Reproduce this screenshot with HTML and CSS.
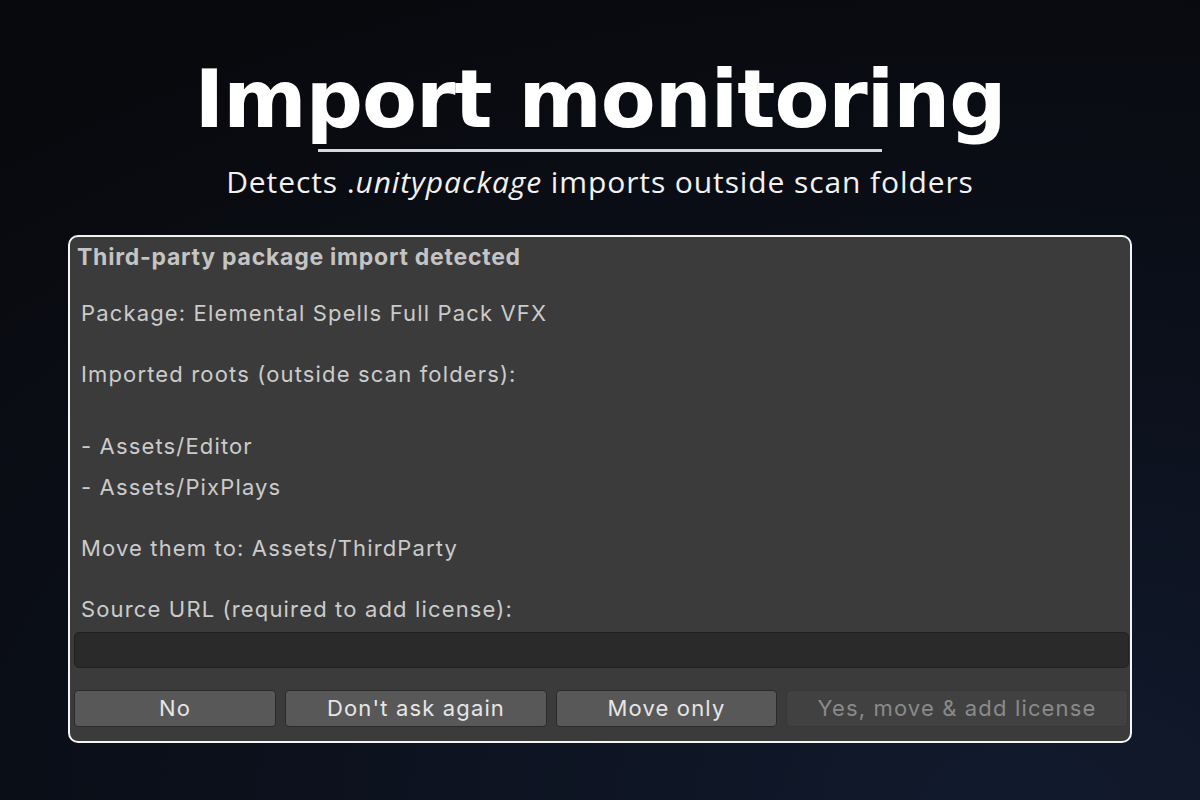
FILE: index.html
```html
<!DOCTYPE html>
<html>
<head>
<meta charset="utf-8">
<link rel="stylesheet" href="styles.css">
</head>
<body>
<div class="page">
  <header class="hero">
    <h1 class="title">Import monitoring</h1>
    <div class="rule"></div>
    <p class="subtitle">Detects .<em>unitypackage</em> imports outside scan folders</p>
  </header>
  <section class="panel">
    <div class="panel-head">Third-party package import detected</div>
    <div class="line l-pkg">Package: Elemental Spells Full Pack VFX</div>
    <div class="line l-roots">Imported roots (outside scan folders):</div>
    <div class="line l-item1">- Assets/Editor</div>
    <div class="line l-item2">- Assets/PixPlays</div>
    <div class="line l-move">Move them to: Assets/ThirdParty</div>
    <div class="line l-src">Source URL (required to add license):</div>
    <div class="field"></div>
    <div class="buttons">
      <div class="btn b-no">No</div>
      <div class="btn b-dont">Don't ask again</div>
      <div class="btn b-move">Move only</div>
      <div class="btn b-yes disabled">Yes, move &amp; add license</div>
    </div>
  </section>
</div>
</body>
</html>
```

FILE: styles.css
```css
* { box-sizing: border-box; }
html, body { margin: 0; padding: 0; }
body {
  width: 1200px;
  height: 800px;
  overflow: hidden;
  background: radial-gradient(ellipse 130% 110% at 85% 100%, #111a2d 0%, #0c111d 45%, #08090d 100%);
  font-family: Inter, "Noto Sans", sans-serif;
}
.page {
  display: flex;
  flex-direction: column;
  align-items: center;
  height: 800px;
}
.hero {
  display: flex;
  flex-direction: column;
  align-items: center;
  padding-top: 50px;
}
.title {
  margin: 0;
  font-family: "DejaVu Sans", sans-serif;
  font-weight: 700;
  font-size: 80px;
  line-height: 100px;
  color: #ffffff;
  letter-spacing: -1px;
}
.rule {
  width: 564px;
  height: 3px;
  background: #d8d8dc;
  margin-top: -1px;
}
.subtitle {
  margin: 10px 0 0 0;
  font-family: "Open Sans", sans-serif;
  font-weight: 400;
  font-size: 30px;
  line-height: 40px;
  letter-spacing: 0.9px;
  color: #f2f2f2;
}
.subtitle em { font-style: italic; }
.panel {
  margin-top: 33px;
  width: 1064px;
  height: 508px;
  border: 2px solid #f4f4f4;
  border-radius: 10px;
  background: #3b3b3b;
  padding: 0 1px 0 4px;
  display: flex;
  flex-direction: column;
  color: #cbcbcb;
  font-size: 22px;
  letter-spacing: 1.15px;
}
.panel-head {
  font-weight: 700;
  font-size: 23px;
  line-height: 28px;
  margin-top: 6px;
  padding-left: 3px;
  letter-spacing: 0.75px;
  color: #c4c4c4;
}
.line {
  line-height: 26px;
  padding-left: 7px;
}
.l-pkg { margin-top: 29px; }
.l-roots { margin-top: 35px; }
.l-item1 { margin-top: 46px; }
.l-item2 { margin-top: 15px; }
.l-move { margin-top: 35px; }
.l-src { margin-top: 35px; }
.field {
  margin-top: 10px;
  height: 36px;
  background: #2a2a2a;
  border: 1px solid #202020;
  border-radius: 5px;
}
.buttons {
  margin-top: 22px;
  display: flex;
  gap: 9px;
  padding-right: 1px;
}
.btn {
  height: 37px;
  border-radius: 4px;
  background: #585858;
  border: 1px solid #2a2a2a;
  color: #e6e6e6;
  font-size: 22px;
  line-height: 35px;
  text-align: center;
}
.b-no { width: 202px; }
.b-dont { width: 262px; }
.b-move { width: 221px; }
.b-yes { flex: 1; }
.btn.disabled {
  background: #414141;
  border-color: #373737;
  color: #8a8a8a;
}
```
